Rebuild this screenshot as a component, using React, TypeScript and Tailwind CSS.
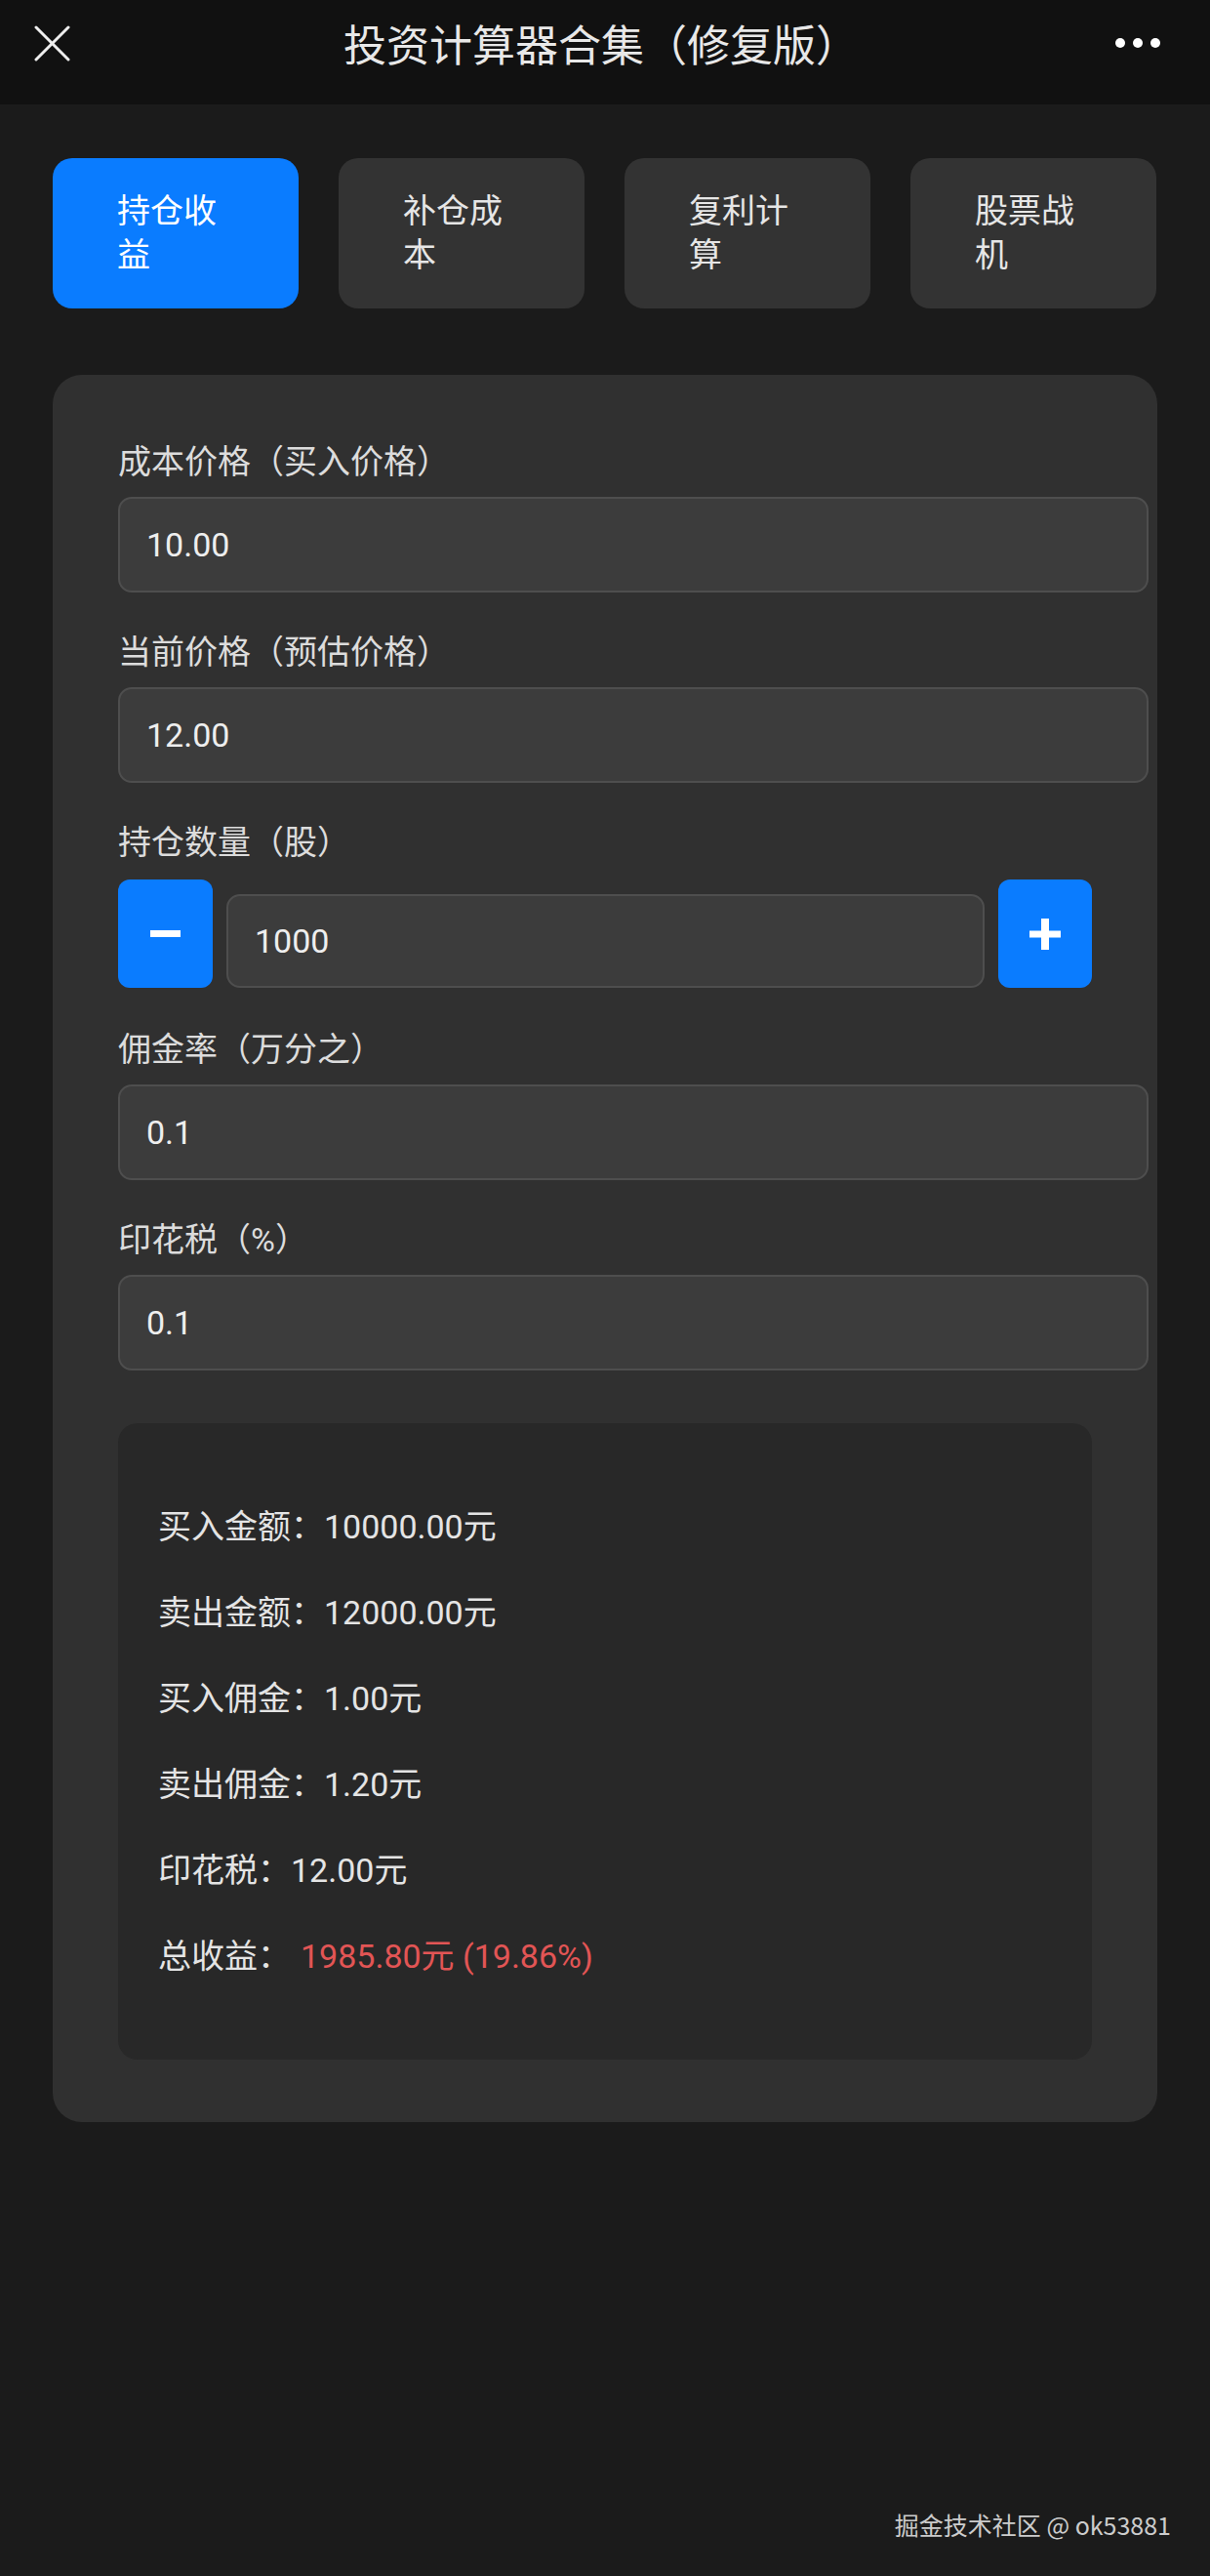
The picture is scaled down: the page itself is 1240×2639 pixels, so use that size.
import React, { useState } from 'react';

const tabs = ['持仓收益', '补仓成本', '复利计算', '股票战机'];

function Field({ label, value }: { label: string; value: string }) {
  return (
    <div className="mb-[39px]">
      <div className="text-[34px] leading-[45px] text-[#dcdcdc] mb-[13px]">{label}</div>
      <input
        readOnly
        value={value}
        className="box-content w-full h-[94px] px-[27px] bg-[#3c3c3c] border-2 border-[#4e4e4e] rounded-[14px] text-[34px] text-[#eeeeee] outline-none"
      />
    </div>
  );
}

export default function App() {
  const [active, setActive] = useState(0);
  const [qty, setQty] = useState(1000);

  const lines = [
    ['买入金额：', '10000.00元'],
    ['卖出金额：', '12000.00元'],
    ['买入佣金：', '1.00元'],
    ['卖出佣金：', '1.20元'],
    ['印花税：', '12.00元'],
  ];

  return (
    <div className="w-[1240px] min-h-[2639px] bg-[#1b1b1b] flex flex-col font-['Roboto','Noto_Sans_CJK_SC',sans-serif]">
      {/* Header */}
      <div className="h-[107px] bg-[#111111]">
        <div className="h-[88px] grid grid-cols-[1fr_auto_1fr] items-center pl-[35px] pr-[51px]">
          <svg width="37" height="37" viewBox="0 0 37 37" className="justify-self-start">
            <line x1="2" y1="2" x2="35" y2="35" stroke="#eeeeee" strokeWidth="3" strokeLinecap="round" />
            <line x1="35" y1="2" x2="2" y2="35" stroke="#eeeeee" strokeWidth="3" strokeLinecap="round" />
          </svg>
          <div className="text-[44px] leading-[60px] pl-[8px] text-[#e8e8e8] font-['Noto_Sans_CJK_SC',sans-serif]">
            投资计算器合集（修复版）
          </div>
          <div className="justify-self-end flex items-center gap-[8px]">
            <span className="w-[10px] h-[10px] rounded-full bg-white" />
            <span className="w-[10px] h-[10px] rounded-full bg-white" />
            <span className="w-[10px] h-[10px] rounded-full bg-white" />
          </div>
        </div>
      </div>

      {/* Tabs */}
      <div className="mt-[55px] px-[54px] flex gap-[41px]">
        {tabs.map((t, i) => (
          <button
            key={t}
            onClick={() => setActive(i)}
            className={`w-[252px] h-[154px] rounded-[20px] px-[66px] flex items-center text-left text-[34px] leading-[45px] ${
              i === active ? 'bg-[#0a7cff] text-white' : 'bg-[#333333] text-[#e6e6e6]'
            }`}
          >
            {t}
          </button>
        ))}
      </div>

      {/* Card */}
      <div className="mt-[68px] mx-[54px] bg-[#303030] rounded-[30px] px-[67px] pt-[67px] pb-[64px]">
        <Field label="成本价格（买入价格）" value="10.00" />
        <Field label="当前价格（预估价格）" value="12.00" />

        <div className="text-[34px] leading-[45px] text-[#dcdcdc] mb-[15px]">持仓数量（股）</div>
        <div className="flex items-end gap-[14px] mb-[41px]">
          <button
            onClick={() => setQty(q => Math.max(0, q - 100))}
            className="w-[97px] h-[111px] shrink-0 rounded-[12px] bg-[#0a7cff] flex items-center justify-center"
          >
            <svg width="31" height="7" viewBox="0 0 31 7">
              <rect x="0" y="0" width="31" height="7" fill="white" />
            </svg>
          </button>
          <input
            readOnly
            value={qty}
            className="flex-1 min-w-0 h-[96px] px-[27px] bg-[#3c3c3c] border-2 border-[#4e4e4e] rounded-[14px] text-[34px] text-[#eeeeee] outline-none"
          />
          <button
            onClick={() => setQty(q => q + 100)}
            className="w-[96px] h-[111px] shrink-0 rounded-[12px] bg-[#0a7cff] flex items-center justify-center"
          >
            <svg width="32" height="32" viewBox="0 0 32 32">
              <rect x="12" y="0" width="8" height="32" fill="white" />
              <rect x="0" y="12.5" width="32" height="7" fill="white" />
            </svg>
          </button>
        </div>

        <Field label="佣金率（万分之）" value="0.1" />
        <Field label="印花税（%）" value="0.1" />

        {/* Result */}
        <div className="mt-[54px] bg-[#282828] rounded-[20px] px-[41px] py-[62px] text-[34px] leading-[88px] text-[#e4e4e4]">
          {lines.map(([k, v]) => (
            <div key={k}>
              {k}
              {v}
            </div>
          ))}
          <div>
            总收益：<span className="ml-[10px] text-[#e25555]">1985.80元 (19.86%)</span>
          </div>
        </div>
      </div>

      {/* Watermark */}
      <div className="mt-auto self-end pr-[40px] pb-[37px] text-[25px] leading-[32px] text-[#cccccc] font-['Noto_Sans_CJK_SC',sans-serif]">
        掘金技术社区 @ ok53881
      </div>
    </div>
  );
}
